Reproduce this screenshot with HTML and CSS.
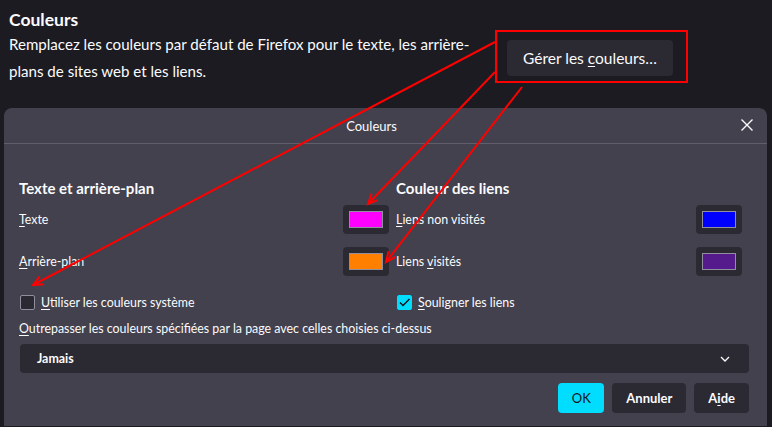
FILE: index.html
```html
<!DOCTYPE html>
<html lang="fr">
<head>
<meta charset="utf-8">
<title>Couleurs</title>
<link rel="stylesheet" href="styles.css">
</head>
<body>
<div class="page">
  <h1 class="title">Couleurs</h1>
  <div class="intro">
    <p class="intro-text">Remplacez les couleurs par défaut de Firefox pour le texte, les arrière-plans de sites web et les liens.</p>
    <button class="manage-btn">Gérer les <u>c</u>ouleurs…</button>
  </div>
</div>

<div class="dialog">
  <div class="dialog-head">
    <span class="dialog-title">Couleurs</span>
    <svg class="close" width="12" height="12" viewBox="0 0 12 12"><path d="M0.5 0.5 L11.5 11.5 M11.5 0.5 L0.5 11.5" stroke="#fbfbfe" stroke-width="1.4" fill="none"/></svg>
  </div>
  <div class="dialog-body">
    <div class="cols">
      <div class="col">
        <div class="group-title">Texte et arrière-plan</div>
        <div class="row"><span><u>T</u>exte</span><span class="swatch-btn"><span class="swatch sw-magenta"></span></span></div>
        <div class="row"><span><u>A</u>rrière-plan</span><span class="swatch-btn"><span class="swatch sw-orange"></span></span></div>
        <label class="check"><span class="box"></span><span><u>U</u>tiliser les couleurs système</span></label>
      </div>
      <div class="col">
        <div class="group-title">Couleur des liens</div>
        <div class="row"><span><u>L</u>iens non visités</span><span class="swatch-btn"><span class="swatch sw-blue"></span></span></div>
        <div class="row"><span>Liens <u>v</u>isités</span><span class="swatch-btn"><span class="swatch sw-purple"></span></span></div>
        <label class="check"><span class="box checked"><svg width="15" height="15" viewBox="0 0 15 15"><path d="M3 7.5 L6 10.5 L12.5 4" stroke="#15141a" stroke-width="1.5" fill="none"/></svg></span><span><u>S</u>ouligner les liens</span></label>
      </div>
    </div>
    <div class="override"><u>O</u>utrepasser les couleurs spécifiées par la page avec celles choisies ci-dessus</div>
    <div class="select"><span>Jamais</span><svg width="10" height="6" viewBox="0 0 10 6"><path d="M1 1 L5 5 L9 1" stroke="#fbfbfe" stroke-width="1.3" fill="none"/></svg></div>
    <div class="actions">
      <button class="btn btn-primary">OK</button>
      <button class="btn">Annuler</button>
      <button class="btn">A<u>i</u>de</button>
    </div>
  </div>
</div>

<svg class="annot" width="772" height="427" viewBox="0 0 772 427">
  <defs>
    <marker id="ah" markerUnits="userSpaceOnUse" markerWidth="14" markerHeight="12" refX="11" refY="5" orient="auto">
      <path d="M1 0.5 L11 5 L1 9.5" stroke="#ff0000" stroke-width="2" fill="none"/>
    </marker>
  </defs>
  <rect x="496" y="31" width="191" height="51" fill="none" stroke="#ff0000" stroke-width="2"/>
  <line x1="495" y1="42" x2="33" y2="285" stroke="#ff0000" stroke-width="2" marker-end="url(#ah)"/>
  <line x1="495" y1="72" x2="368" y2="204" stroke="#ff0000" stroke-width="2" marker-end="url(#ah)"/>
  <line x1="522" y1="87" x2="386" y2="262" stroke="#ff0000" stroke-width="2" marker-end="url(#ah)"/>
</svg>
</body>
</html>
```

FILE: styles.css
```css
* { box-sizing: border-box; }
html, body { margin: 0; padding: 0; }
body {
  background: #1c1b22;
  color: #fbfbfe;
  font-family: Lato, "Noto Sans", sans-serif;
  width: 772px;
  height: 427px;
  overflow: hidden;
  position: relative;
}
u { text-decoration-thickness: 1px; text-underline-offset: 2px; }
.page { padding: 9px 0 0 9px; }
.title {
  margin: 0;
  font-size: 17.5px;
  font-weight: 700;
  line-height: 22px;
}
.intro { display: flex; align-items: center; }
.intro-text {
  margin: 0;
  width: 485px;
  font-size: 15.1px;
  line-height: 27px;
}
.manage-btn {
  margin-left: 13px;
  width: 166px;
  height: 36px;
  background: #2b2a33;
  color: #fbfbfe;
  border: 0;
  border-radius: 4px;
  font-family: inherit;
  font-size: 15.5px;
  padding: 0;
}
.dialog {
  margin: 23px 0 0 4px;
  width: 763px;
  height: 318px;
  background: #42414d;
  border-radius: 8px 8px 0 0;
  font-size: 12.4px;
}
.dialog-head {
  height: 36px;
  border-bottom: 1px solid #5f5e6a;
  display: flex;
  align-items: center;
  justify-content: center;
  padding-right: 28px;
  position: relative;
}
.dialog-title { font-size: 13px; }
.close { position: absolute; right: 14px; top: 11px; }
.dialog-body { padding: 34px 18px 0 15px; }
.cols { display: grid; grid-template-columns: 370px 346px; column-gap: 7px; }
.group-title { font-size: 15px; font-weight: 700; line-height: 20px; margin-bottom: 7px; }
.row {
  display: flex;
  align-items: center;
  justify-content: space-between;
  height: 29px;
  margin-bottom: 13px;
}
.row:nth-child(3) { margin-bottom: 18px; }
.swatch-btn {
  width: 46px;
  height: 29px;
  background: #2b2a33;
  border-radius: 4px;
  display: flex;
  align-items: center;
  justify-content: center;
}
.swatch { width: 34px; height: 17px; border: 1px solid #8f8f9d; }
.sw-magenta { background: #ff00ff; }
.sw-orange { background: #ff8000; }
.sw-blue { background: #0000ff; }
.sw-purple { background: #551a8b; }
.check { display: flex; align-items: center; gap: 6px; height: 16px; margin-left: 1px; }
.box {
  width: 15px;
  height: 15px;
  border: 1px solid #8f8f9d;
  background: #2b2a33;
  border-radius: 2px;
  display: block;
}
.box.checked { background: #00ddff; border-color: #00ddff; }
.box.checked svg { display: block; margin: -1px; }
.override { margin-top: 10px; line-height: 18px; }
.select {
  margin: 6px 0 0 1px;
  height: 29px;
  background: #2b2a33;
  border-radius: 4px;
  display: flex;
  align-items: center;
  justify-content: space-between;
  padding: 0 19px 0 17px;
  font-weight: 700;
}
.actions { display: flex; justify-content: flex-end; gap: 8px; margin-top: 10px; }
.btn {
  height: 30px;
  padding: 0 14px;
  background: #2b2a33;
  color: #fbfbfe;
  border: 0;
  border-radius: 4px;
  font-family: inherit;
  font-size: 13px;
  font-weight: 700;
}
.btn-primary { width: 46px; padding: 0; background: #00ddff; color: #15141a; font-weight: 400; }
.annot { position: absolute; left: 0; top: 0; pointer-events: none; }
```
